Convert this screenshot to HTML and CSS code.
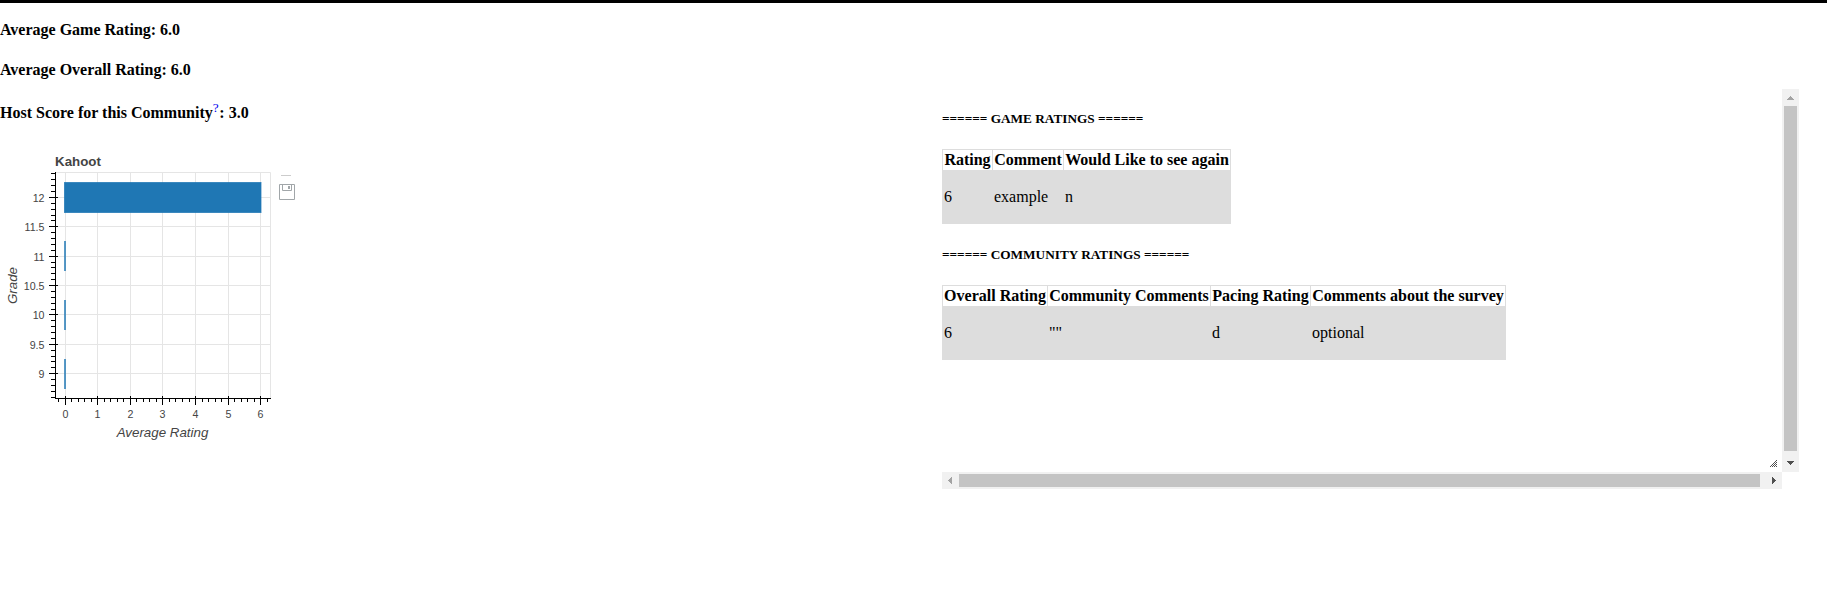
FILE: index.html
```
<!DOCTYPE html>
<html lang="en">
<head>
<meta charset="utf-8">
<title>Ratings</title>
<link rel="stylesheet" href="styles.css">
</head>
<body>
<div class="topbar"></div>
<main class="layout">
<section class="summary">
<h4>Average Game Rating: 6.0</h4>
<h4>Average Overall Rating: 6.0</h4>
<h4 class="host">Host Score for this Community<sup><a href="#">?</a></sup>: 3.0</h4>
<svg class="chart" width="320" height="310" viewBox="0 140 320 310">
<path class="grid" d="M65.5 172V398M97.5 172V398M130.5 172V398M162.5 172V398M195.5 172V398M228.5 172V398M260.5 172V398M56 197.5H271M56 226.5H271M56 256.5H271M56 285.5H271M56 314.5H271M56 344.5H271M56 373.5H271M55 172.5H270.5V398"/>
<rect class="bar" x="64.5" y="182.5" width="196.5" height="30"/>
<path class="zero" d="M65 241V271M65 300V330M65 359V389"/>
<path class="axis" d="M55.5 172V399M55 398.5H271M49 197.5H58M49 226.5H58M49 256.5H58M49 285.5H58M49 314.5H58M49 344.5H58M49 373.5H58M65.5 396V405M97.5 396V405M130.5 396V405M162.5 396V405M195.5 396V405M228.5 396V405M260.5 396V405"/>
<path class="axis" d="M51 173.5H55M51 179.5H55M51 185.5H55M51 191.5H55M51 203.5H55M51 209.5H55M51 215.5H55M51 220.5H55M51 232.5H55M51 238.5H55M51 244.5H55M51 250.5H55M51 262.5H55M51 267.5H55M51 273.5H55M51 279.5H55M51 291.5H55M51 297.5H55M51 303.5H55M51 309.5H55M51 320.5H55M51 326.5H55M51 332.5H55M51 338.5H55M51 350.5H55M51 356.5H55M51 361.5H55M51 367.5H55M51 379.5H55M51 385.5H55M51 391.5H55M51 397.5H55"/>
<path class="axis" d="M58.5 399V402M71.5 399V402M78.5 399V402M84.5 399V402M91.5 399V402M104.5 399V402M110.5 399V402M117.5 399V402M123.5 399V402M136.5 399V402M143.5 399V402M149.5 399V402M156.5 399V402M169.5 399V402M175.5 399V402M182.5 399V402M189.5 399V402M202.5 399V402M208.5 399V402M215.5 399V402M221.5 399V402M234.5 399V402M241.5 399V402M247.5 399V402M254.5 399V402M267.5 399V402"/>
<text class="title" x="55" y="166">Kahoot</text>
<g class="tick end"><text x="44.5" y="202">12</text><text x="44.5" y="231">11.5</text><text x="44.5" y="261">11</text><text x="44.5" y="290">10.5</text><text x="44.5" y="319">10</text><text x="44.5" y="349">9.5</text><text x="44.5" y="378">9</text></g>
<g class="tick mid"><text x="65.5" y="418">0</text><text x="97.5" y="418">1</text><text x="130.5" y="418">2</text><text x="162.5" y="418">3</text><text x="195.5" y="418">4</text><text x="228.5" y="418">5</text><text x="260.5" y="418">6</text></g>
<text class="label" x="162.5" y="437">Average Rating</text>
<text class="label" transform="translate(17 285.5) rotate(-90)">Grade</text>
<path class="rule" d="M281 175.5H291"/>
<path class="disk" d="M279.5 184.5H294.5V199.5H279.5ZM282.5 185V190.5H291.5V185"/>
<path class="slot" d="M288 186H290V189H288Z"/>
</svg>
</section>
<section class="panel">
<div class="content">
<h5>====== GAME RATINGS ======</h5>
<table class="games">
<colgroup><col class="g1"><col class="g2"><col></colgroup>
<tr><th>Rating</th><th>Comment</th><th>Would Like to see again</th></tr>
<tr class="shade"><td><p>6</p></td><td><p>example</p></td><td><p>n</p></td></tr>
</table>
<h5>====== COMMUNITY RATINGS ======</h5>
<table class="community">
<colgroup><col class="c1"><col class="c2"><col class="c3"><col></colgroup>
<tr><th>Overall Rating</th><th>Community Comments</th><th>Pacing Rating</th><th>Comments about the survey</th></tr>
<tr class="shade"><td><p>6</p></td><td><p>""</p></td><td><p>d</p></td><td><p>optional</p></td></tr>
</table>
<svg class="grip" width="7" height="7" shape-rendering="crispEdges"><path d="M6 0h1v1h-1zM5 1h1v1h-1zM4 2h1v1h-1zM6 2h1v1h-1zM3 3h1v1h-1zM5 3h1v1h-1zM2 4h1v1h-1zM4 4h1v1h-1zM6 4h1v1h-1zM1 5h1v1h-1zM3 5h1v1h-1zM5 5h1v1h-1zM0 6h1v1h-1zM2 6h1v1h-1zM4 6h1v1h-1zM6 6h1v1h-1z"/></svg>
</div>
<div class="vbar">
<svg width="17" height="17" shape-rendering="crispEdges"><path class="off" d="M8 7h1v1h1v1h1v1h1v1h-7v-1h1v-1h1v-1h1z"/></svg>
<div class="thumb"></div>
<svg width="17" height="17" shape-rendering="crispEdges"><path d="M5 6h7v1h-1v1h-1v1h-1v1h-1v-1h-1v-1h-1v-1h-1z"/></svg>
</div>
<div class="hbar">
<svg width="17" height="17" shape-rendering="crispEdges"><path class="off" d="M10 5v7h-1v-1h-1v-1h-1v-1h-1v-1h1v-1h1v-1h1v-1z"/></svg>
<div class="thumb"></div>
<svg width="17" height="17" shape-rendering="crispEdges"><path d="M7 5v7h1v-1h1v-1h1v-1h1v-1h-1v-1h-1v-1h-1v-1z"/></svg>
</div>
</section>
</main>
</body>
</html>
```
FILE: styles.css
```
body { margin: 0; background: #fff; color: #000; font: 16px/18px "Liberation Serif", "Times New Roman", serif; overflow: hidden; }
.topbar { height: 3px; background: #000; }
.layout { display: grid; grid-template-columns: 942px 857px; align-items: start; }
h4 { margin: 0 0 22px; font-size: 16px; line-height: 18px; }
.summary { padding-top: 18px; }
.host { margin: 25px 0 18px; }
sup { font-size: 13.33px; line-height: 0; vertical-align: 6px; letter-spacing: .7px; font-weight: normal; }
sup a { color: #00e; text-decoration: none; }
.chart { display: block; }
.chart path { fill: none; stroke-width: 1; }
.chart .grid { stroke: #e5e5e5; }
.chart .axis { stroke: #000; }
.bar { fill: #1f77b4; stroke: #1f77b4; stroke-opacity: .75; }
.chart .zero { stroke: #1f77b4; stroke-width: 2; opacity: .75; }
.chart text { font-family: "Liberation Sans", Arial, sans-serif; fill: #444; }
.chart .title { font-size: 13.33px; font-weight: bold; }
.tick { font-size: 10.67px; }
.end { text-anchor: end; }
.mid { text-anchor: middle; }
.chart .label { font-size: 13.33px; font-style: italic; text-anchor: middle; }
.chart .rule { stroke: #ccc; }
.chart .disk { stroke: #a1a6a9; }
.chart .slot { fill: #a1a6a9; }
.panel { display: grid; grid-template: 383px 17px / 840px 17px; margin-top: 86px; }
.content { position: relative; display: flow-root; }
h5 { margin: 22.18px 0; font-size: 13.28px; line-height: 16px; }
table { border-collapse: collapse; table-layout: fixed; }
.games { width: 289px; }
.community { width: 564px; }
.g1 { width: 50px; }
.g2 { width: 71px; }
.c1 { width: 105px; }
.c2 { width: 163px; }
.c3 { width: 100px; }
th { border: 1px solid #ddd; padding: 1px; white-space: nowrap; }
td { padding: 1px; border: 1px solid #ddd; }
td p { margin: 16px 0; }
.shade { background: #ddd; }
.grip { position: absolute; right: 5px; bottom: 5px; fill: #505050; }
.vbar, .hbar { display: flex; background: #f1f1f1; fill: #505050; }
.vbar { flex-direction: column; }
.vbar svg, .hbar svg { flex: none; display: block; }
.off { fill: #a3a3a3; }
.thumb { background: #c4c4c4; }
.vbar .thumb { height: 345px; margin: 0 2px 4px; }
.hbar .thumb { width: 801px; margin: 2px 5px 2px 0; }
```
